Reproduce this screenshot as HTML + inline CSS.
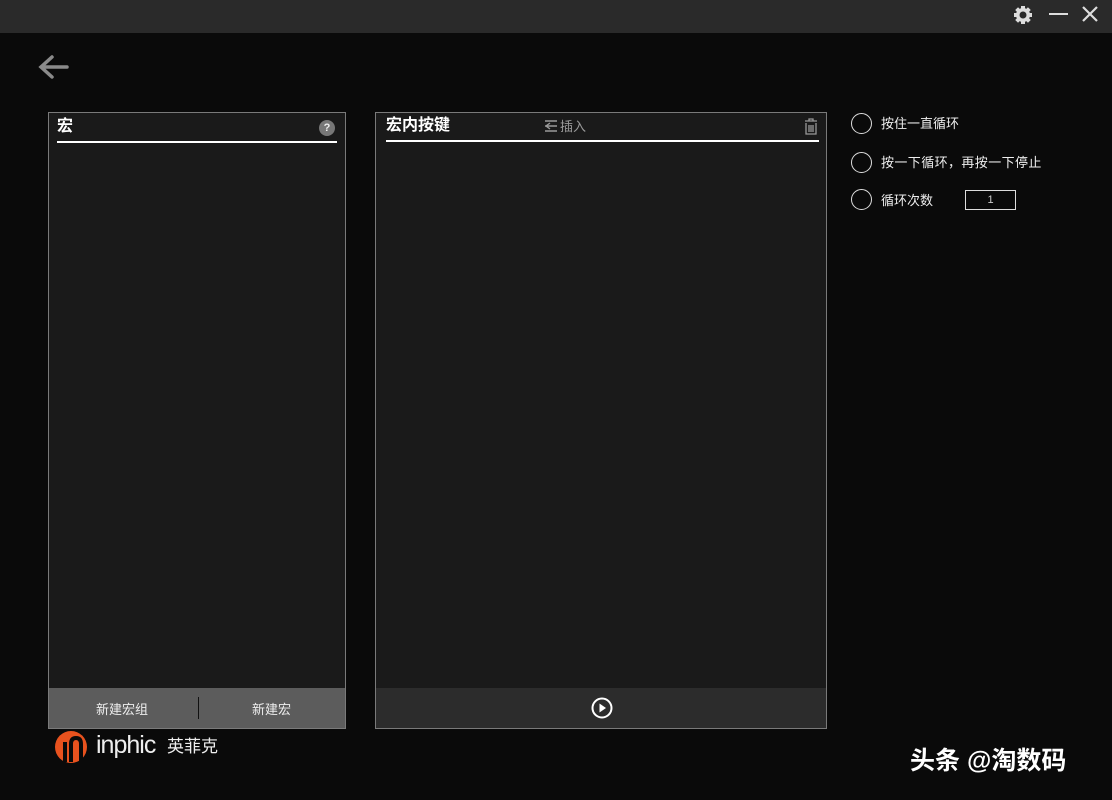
<!DOCTYPE html>
<html><head><meta charset="utf-8"><style>
*{margin:0;padding:0;box-sizing:border-box}
body{width:1112px;height:800px;background:#0a0a0a;position:relative;overflow:hidden;font-family:"Liberation Sans","Noto Sans CJK SC",sans-serif;color:#fff}
.top{position:absolute;left:0;top:0;width:1112px;height:33px;background:#2a2a2a}
.panel{position:absolute;background:#1a1a1a;border:1px solid #7a7a7a}
.t{position:absolute;font-size:16px;font-weight:bold;color:#fff;line-height:20px}
.ul{position:absolute;height:2px;background:#fff}
.lbl{position:absolute;font-size:13px;color:#eee;line-height:16px}
.rad{position:absolute;width:21px;height:21px;border:1.5px solid #ddd;border-radius:50%}
</style></head><body>
<div class="top"></div>
<svg style="position:absolute;left:1012px;top:4px" width="22" height="22" viewBox="0 0 22 22"><g fill="#ddd"><circle cx="11" cy="11" r="7"/><rect x="9" y="2" width="4" height="18"/><rect x="2" y="9" width="18" height="4"/><rect x="9" y="2" width="4" height="18" transform="rotate(45 11 11)"/><rect x="9" y="2" width="4" height="18" transform="rotate(-45 11 11)"/></g><circle cx="11" cy="11" r="3.5" fill="#2a2a2a"/></svg>
<div style="position:absolute;left:1049px;top:13px;width:19px;height:2px;background:#ddd"></div>
<svg style="position:absolute;left:1081px;top:5px" width="18" height="18"><path d="M2 2L16 16M16 2L2 16" stroke="#ddd" stroke-width="2.2"/></svg>
<svg style="position:absolute;left:37px;top:53px" width="32" height="28"><path d="M30 14H5M15 4L4 14L15 24" stroke="#8a8a8a" stroke-width="3.5" fill="none" stroke-linecap="round"/></svg>

<div class="panel" style="left:48px;top:112px;width:298px;height:617px"></div>
<div class="t" style="left:57px;top:117px">宏</div>
<div style="position:absolute;left:319px;top:120px;width:16px;height:16px;border-radius:50%;background:#777;color:#eee;font-size:11px;font-weight:bold;text-align:center;line-height:16px">?</div>
<div class="ul" style="left:57px;top:141px;width:280px"></div>
<div style="position:absolute;left:49px;top:688px;width:296px;height:40px;background:#5c5c5c"></div>
<div class="lbl" style="left:96px;top:702px">新建宏组</div>
<div style="position:absolute;left:198px;top:697px;width:1px;height:22px;background:#111"></div>
<div class="lbl" style="left:252px;top:702px">新建宏</div>

<div class="panel" style="left:375px;top:112px;width:452px;height:617px"></div>
<div class="t" style="left:386px;top:116px">宏内按键</div>
<svg style="position:absolute;left:544px;top:120px" width="14" height="14"><path d="M1 1H13M1 6H13M1 11H13M6 3L2 6L6 9" stroke="#999" stroke-width="1.4" fill="none"/></svg>
<div style="position:absolute;left:560px;top:119px;font-size:13px;color:#999;line-height:16px">插入</div>
<svg style="position:absolute;left:803px;top:118px" width="16" height="17"><path d="M2 3H14M6 3V1H10V3M3 5V16H13V5M6 7V14M8 7V14M10 7V14" stroke="#999" stroke-width="1.3" fill="none"/></svg>
<div class="ul" style="left:386px;top:140px;width:433px"></div>
<div style="position:absolute;left:376px;top:688px;width:450px;height:40px;background:#2c2c2c"></div>
<svg style="position:absolute;left:591px;top:697px" width="22" height="22"><circle cx="11" cy="11" r="9.5" stroke="#fff" stroke-width="2" fill="none"/><path d="M8.5 6.5L15 11L8.5 15.5Z" fill="#fff"/></svg>

<div class="rad" style="left:851px;top:113px"></div><div class="lbl" style="left:881px;top:116px">按住一直循环</div>
<div class="rad" style="left:851px;top:152px"></div><div class="lbl" style="left:881px;top:155px;letter-spacing:0.4px">按一下循环，再按一下停止</div>
<div class="rad" style="left:851px;top:189px"></div><div class="lbl" style="left:881px;top:193px">循环次数</div>
<div style="position:absolute;left:965px;top:190px;width:51px;height:20px;border:1px solid #ddd;font-size:11px;text-align:center;line-height:18px;color:#ccc">1</div>

<svg style="position:absolute;left:54px;top:730px" width="36" height="34"><circle cx="17" cy="17" r="16" fill="#e8521e"/><rect x="9" y="12" width="4" height="20" fill="#0a0a0a"/><path d="M17 32V14Q17 8 22 8Q27 8 27 14V32" stroke="#0a0a0a" stroke-width="4" fill="none"/></svg>
<div style="position:absolute;left:96px;top:731px;font-size:25px;color:#eee;letter-spacing:-1px;line-height:28px">inphic</div>
<div style="position:absolute;left:167px;top:737px;font-size:17px;color:#eee;line-height:20px">英菲克</div>
<div style="position:absolute;left:910px;top:746px;font-size:25px;color:#fff;line-height:30px;font-weight:bold">头条 @淘数码</div>
</body></html>
